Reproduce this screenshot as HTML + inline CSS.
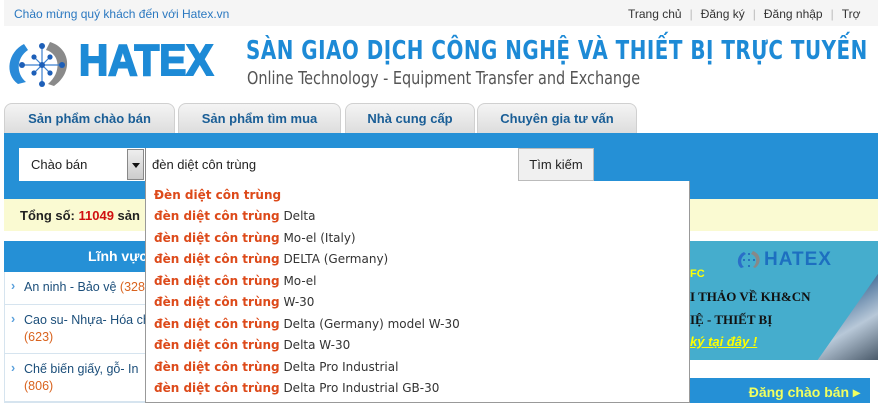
<!DOCTYPE html>
<html><head><meta charset="utf-8"><style>
*{margin:0;padding:0;box-sizing:border-box}
body{width:878px;height:403px;overflow:hidden;background:#fff;font-family:"Liberation Sans",Arial,sans-serif;position:relative}
.abs{position:absolute}
.top{left:4px;top:0;width:874px;height:26px;background:#f5f5f5;font-size:12px;color:#1e6fb5}
.tl{left:14px;top:7px;color:#2a78c0}
.tr{left:628px;top:7px;color:#333;white-space:nowrap;font-size:12px}
.tr span{color:#bbb;margin:0 8px}
.title{left:246px;top:36px;font-family:"DejaVu Sans Condensed","DejaVu Sans",sans-serif;font-weight:bold;font-size:26px;color:#1d8ad6;letter-spacing:0.6px;white-space:nowrap;transform:scaleX(.85);transform-origin:left}
.sub{left:247px;top:68px;font-family:"DejaVu Sans Condensed","DejaVu Sans",sans-serif;font-size:18px;color:#555;white-space:nowrap;transform:scaleX(.89);transform-origin:left}
.tab{top:103px;height:31px;background:linear-gradient(#f4f4f4,#dcdcdc);border:1px solid #d0d0d0;border-bottom:none;border-radius:8px 8px 0 0;font-size:13px;font-weight:bold;color:#1a5e96;text-align:center;line-height:29px}
.blue{left:4px;top:133px;width:874px;height:66px;background:#2590d6}
.sel{left:19px;top:148px;width:126px;height:33px;background:#fff;font-size:13px;color:#222;padding:9px 12px}
.arr{left:127px;top:149px;width:17px;height:31px;background:linear-gradient(#eee,#ccc);border:1px solid #888}
.arr:after{content:"";position:absolute;left:4px;top:13px;border:4px solid transparent;border-top:5px solid #111}
.inp{left:145px;top:148px;width:373px;height:33px;background:#fff;border-left:1px solid #888;font-size:13px;color:#222;padding:9px 6px}
.btn{left:518px;top:148px;width:76px;height:33px;background:#f0f0f0;border:1px solid #bbb;font-size:13px;color:#222;text-align:center;line-height:31px}
.yel{left:4px;top:199px;width:874px;height:32px;background:#fafad2;font-size:13px;font-weight:bold;color:#222;padding:9px 16px}
.lp{left:4px;top:241px;width:150px;height:162px;border:1px solid #d6e4ef;background:#fff}
.lh{left:4px;top:241px;width:150px;height:31px;background:#2590d6;color:#fff;font-weight:bold;font-size:14px;padding:7px 0 0 84px;white-space:nowrap}
.li{left:5px;width:148px;border-bottom:1px solid #d6e4ef;font-size:12.5px;color:#1b4e7a;padding:7px 0 0 19px;line-height:17px;white-space:nowrap;overflow:hidden}
.li:before{content:"›";position:absolute;left:6px;top:6px;color:#5aa0dc;font-weight:bold}
.li i{font-style:normal;color:#d9631e}
.dd{left:145px;top:181px;width:545px;height:222px;background:#fff;border:1px solid #999;border-top:none;font-family:"DejaVu Sans",sans-serif;font-size:12px;color:#333}
.dd div{height:21.5px;line-height:21.5px;padding-left:8px;white-space:nowrap}
.dd b{color:#dd4a1a}
.ban{left:690px;top:241px;width:188px;height:119px;background:#45adcd;overflow:hidden}
.dang{left:690px;top:378px;width:180px;height:25px;background:#2590d6;color:#f0ff60;font-weight:bold;font-size:14px;text-align:right;padding:6px 10px 0 0}
</style></head><body>
<div class="abs top"></div>
<div class="abs tl" style="font-size:12px">Chào mừng quý khách đến với Hatex.vn</div>
<div class="abs tr">Trang chủ<span>|</span>Đăng ký<span>|</span>Đăng nhập<span>|</span>Trợ</div>
<svg class="abs" style="left:4px;top:38px" width="72" height="52" viewBox="0 0 72 52">
<path d="M20 6 C4 14 0 36 14 46 L22 44 C12 36 12 20 24 12 Z" fill="#2a8ad8"/>
<path d="M46 4 C66 10 70 34 50 48 L44 46 C58 34 56 16 42 12 Z" fill="#8a8a8a"/>
<g stroke="#3a7fcf" stroke-width="1.2"><line x1="38" y1="8" x2="38" y2="46"/><line x1="18" y1="27" x2="58" y2="27"/><line x1="30" y1="19" x2="46" y2="35"/><line x1="46" y1="19" x2="30" y2="35"/></g>
<g fill="#1d5fb8"><circle cx="38" cy="8" r="3"/><circle cx="38" cy="46" r="3"/><circle cx="18" cy="27" r="3"/><circle cx="58" cy="27" r="3"/><circle cx="38" cy="27" r="3"/><circle cx="30" cy="19" r="2.6"/><circle cx="46" cy="19" r="2.6"/><circle cx="30" cy="35" r="2.6"/><circle cx="46" cy="35" r="2.6"/></g>
</svg>
<div class="abs" style="left:79px;top:36px;font-size:44px;font-weight:bold;color:#1d8ad6;-webkit-text-stroke:2px #1d8ad6;transform:scaleX(.92);transform-origin:left">HATEX</div>
<div class="abs title">SÀN GIAO DỊCH CÔNG NGHỆ VÀ THIẾT BỊ TRỰC TUYẾN</div>
<div class="abs sub">Online Technology - Equipment Transfer and Exchange</div>
<div class="abs tab" style="left:4px;width:171px">Sản phẩm chào bán</div>
<div class="abs tab" style="left:178px;width:163px">Sản phẩm tìm mua</div>
<div class="abs tab" style="left:345px;width:130px">Nhà cung cấp</div>
<div class="abs tab" style="left:477px;width:160px">Chuyên gia tư vấn</div>
<div class="abs blue"></div>
<div class="abs sel">Chào bán</div>
<div class="abs arr"></div>
<div class="abs inp">đèn diệt côn trùng</div>
<div class="abs btn">Tìm kiếm</div>
<div class="abs yel">Tổng số: <span style="color:#d01010">11049</span> sản</div>
<div class="abs lp"></div>
<div class="abs lh">Lĩnh vực</div>
<div class="abs li" style="top:272px;height:33px">An ninh - Bảo vệ <i>(328)</i></div>
<div class="abs li" style="top:305px;height:49px">Cao su- Nhựa- Hóa chất<br><i>(623)</i></div>
<div class="abs li" style="top:354px;height:48px">Chế biến giấy, gỗ- In<br><i>(806)</i></div>
<div class="abs ban">
<svg class="abs" style="left:46px;top:9px" width="26" height="20" viewBox="0 0 26 20"><path d="M8 2 C1 5 0 14 5 18 L8 17 C4 14 4 7 10 4Z" fill="#2a6fc8"/><path d="M17 1 C25 4 26 13 19 18 L17 17 C22 13 21 6 15 4Z" fill="#888"/><g fill="#1d5fb8"><circle cx="13" cy="4" r="1"/><circle cx="13" cy="16" r="1"/><circle cx="8" cy="10" r="1"/><circle cx="18" cy="10" r="1"/><circle cx="13" cy="10" r="1"/></g></svg>
<div class="abs" style="left:74px;top:8px;font-size:19px;font-weight:bold;color:#1d6fc0;letter-spacing:1px">HATEX</div>
<div class="abs" style="left:0;top:27px;font-size:11px;font-weight:bold;color:#ff0">FC</div>
<div class="abs" style="left:0;top:48px;font-family:'Liberation Serif',serif;font-size:13px;font-weight:bold;color:#111">I THẢO VỀ KH&amp;CN</div>
<div class="abs" style="left:0;top:71px;font-family:'Liberation Serif',serif;font-size:13px;font-weight:bold;color:#111">IỆ - THIẾT BỊ</div>
<div class="abs" style="left:0;top:93px;font-size:13px;font-style:italic;font-weight:bold;color:#ff0;text-decoration:underline">ký tại đây !</div>
<div class="abs" style="left:120px;top:0;width:120px;height:130px;background:linear-gradient(135deg,#fff 0 4%,#2a5a8a 5%,#b8c8d8 40%,#506070 70%,#223 100%);transform:skewX(-35deg);transform-origin:bottom"></div>
</div>
<div class="abs dang">Đăng chào bán ▸</div>
<div class="abs dd">
<div style="padding-top:4px;height:25px"><b>Đèn diệt côn trùng</b></div>
<div><b>đèn diệt côn trùng</b> Delta</div>
<div><b>đèn diệt côn trùng</b> Mo-el (Italy)</div>
<div><b>đèn diệt côn trùng</b> DELTA (Germany)</div>
<div><b>đèn diệt côn trùng</b> Mo-el</div>
<div><b>đèn diệt côn trùng</b> W-30</div>
<div><b>đèn diệt côn trùng</b> Delta (Germany) model W-30</div>
<div><b>đèn diệt côn trùng</b> Delta W-30</div>
<div><b>đèn diệt côn trùng</b> Delta Pro Industrial</div>
<div><b>đèn diệt côn trùng</b> Delta Pro Industrial GB-30</div>
</div>
</body></html>
